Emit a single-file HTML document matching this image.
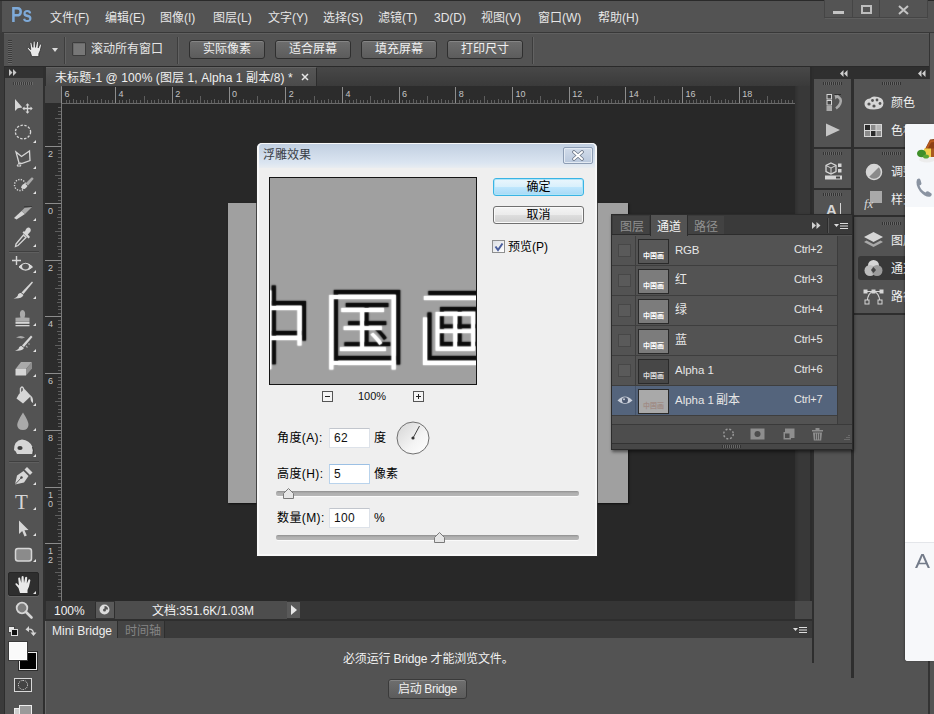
<!DOCTYPE html><html lang="zh"><head><meta charset="utf-8"><title>Photoshop</title><style>
*{box-sizing:border-box;margin:0;padding:0}
html,body{width:934px;height:714px;overflow:hidden;background:#535353}
body{position:relative;font-family:"Liberation Sans","Noto Sans CJK SC",sans-serif;font-size:12px;color:#e6e6e6;line-height:1}
.a{position:absolute}
.t{position:absolute;white-space:nowrap;line-height:14px;height:14px}
.btn{position:absolute;height:19px;border:1px solid #2f2f2f;border-radius:3px;background:linear-gradient(#6e6e6e,#5c5c5c);color:#f0f0f0;text-align:center;line-height:17px;font-size:12px;box-shadow:inset 0 1px 0 #858585}
.sep{position:absolute;width:1px;background:#3d3d3d;box-shadow:1px 0 0 #626262}
.dk{color:#222}
.row{position:absolute;left:612px;width:225px;height:30px;border-bottom:1px solid #3e3e3e;background:#535353}
.row .eye{position:absolute;left:0;top:0;width:24px;height:29px;border-right:1px solid #3e3e3e}
.row .cb{position:absolute;left:6px;top:8px;width:13px;height:13px;border:1px solid #474747;background:#5a5a5a}
.row .th{position:absolute;left:26px;top:3px;width:31px;height:25px;border:1px solid #2a2a2a;background:#3c3c3c;font-size:7px;line-height:23px;text-align:center;color:#eee;padding-top:4px;font-weight:bold}
.row .nm{position:absolute;left:63px;top:7px;line-height:14px;white-space:nowrap}
.row .sc{position:absolute;left:182px;top:6px;line-height:14px;font-size:11px;white-space:nowrap;letter-spacing:-0.2px}
.inp{position:absolute;width:41px;height:20px;border:1px solid #dde2e9;border-top-color:#c2c6cd;background:#fff;color:#111;line-height:18px;padding-left:4px;font-size:12px;letter-spacing:0.3px}
</style></head><body>
<div class="a" style="left:0;top:0;width:934px;height:1px;background:#2a2a2a"></div>
<div class="a" style="left:0;top:1px;width:934px;height:31px;background:#535353"></div>
<div class="a" style="left:0;top:32px;width:934px;height:1px;background:#383838"></div>
<div class="t" style="left:11px;top:3px;font-size:22.5px;font-weight:bold;color:#7eaad9;line-height:24px;height:24px;transform-origin:0 0;transform:scaleX(0.77)">Ps</div>
<div class="t" style="left:50px;top:11px">文件(F)</div>
<div class="t" style="left:105px;top:11px">编辑(E)</div>
<div class="t" style="left:160px;top:11px">图像(I)</div>
<div class="t" style="left:213px;top:11px">图层(L)</div>
<div class="t" style="left:268px;top:11px">文字(Y)</div>
<div class="t" style="left:323px;top:11px">选择(S)</div>
<div class="t" style="left:378px;top:11px">滤镜(T)</div>
<div class="t" style="left:434px;top:11px">3D(D)</div>
<div class="t" style="left:481px;top:11px">视图(V)</div>
<div class="t" style="left:538px;top:11px">窗口(W)</div>
<div class="t" style="left:598px;top:11px">帮助(H)</div>
<div class="a" style="left:824px;top:0;width:104px;height:18px;border:1px solid #454545;border-top:none;background:#545454;box-shadow:0 2px 0 -1px #5e5e5e"></div>
<div class="a" style="left:852px;top:0;width:1px;height:17px;background:#454545"></div>
<div class="a" style="left:879px;top:0;width:1px;height:17px;background:#454545"></div>
<div class="a" style="left:833px;top:11px;width:11px;height:3px;background:#c4c4c4"></div>
<div class="a" style="left:861px;top:5px;width:11px;height:9px;border:2px solid #bdbdbd;border-top-width:2px"></div>
<svg class="a" style="left:898px;top:5px" width="11" height="10"><path d="M1 1 L10 9 M10 1 L1 9" stroke="#c4c4c4" stroke-width="2"/></svg>
<div class="a" style="left:0;top:1px;width:2px;height:32px;background:#3d3d3d"></div>
<div class="a" style="left:0;top:33px;width:934px;height:33px;background:#535353;border-top:1px solid #5f5f5f"></div>
<div class="a" style="left:0;top:66px;width:934px;height:1px;background:#2a2a2a"></div>
<div class="a" style="left:8px;top:40px;width:4px;height:24px;background:repeating-linear-gradient(#3a3a3a 0 1px,#666 1px 2px)"></div>
<svg class="a" style="left:26px;top:40px" width="19" height="17.5" viewBox="0 0 20 19" preserveAspectRatio="none"><path d="M6 18 L4.5 13 L1.5 9.5 Q1 8 2.6 8.2 L5 10.5 L4.2 3.5 Q4.5 2 6 2.8 L7.3 8 L7.6 1.8 Q8.4 0.4 9.6 1.6 L10 8 L11.2 2.2 Q12.2 1 13.2 2.4 L12.8 8.6 L14.6 4.6 Q15.8 3.8 16.4 5.2 L15 11.5 L13.5 15 L13.5 18 Z" fill="#e9e9e9" stroke="#2b2b2b" stroke-width="0.8"/></svg>
<div class="a" style="left:52px;top:48px;width:0;height:0;border:3.5px solid transparent;border-top:4px solid #dcdcdc"></div>
<div class="sep" style="left:64px;top:37px;height:27px"></div>
<div class="a" style="left:72px;top:42px;width:14px;height:14px;border:1px solid #3c3c3c;background:#777;border-radius:1px;box-shadow:inset 1px 1px 0 #686868"></div>
<div class="t" style="left:91px;top:42px">滚动所有窗口</div>
<div class="sep" style="left:177px;top:37px;height:27px"></div>
<div class="btn" style="left:189px;top:40px;width:76px">实际像素</div>
<div class="btn" style="left:275px;top:40px;width:76px">适合屏幕</div>
<div class="btn" style="left:361px;top:40px;width:76px">填充屏幕</div>
<div class="btn" style="left:447px;top:40px;width:76px">打印尺寸</div>
<div class="sep" style="left:532px;top:37px;height:27px"></div>
<div class="a" style="left:0;top:33px;width:4px;height:681px;background:#3b3b3b"></div><div class="a" style="left:4px;top:67px;width:1px;height:647px;background:#2e2e2e"></div>
<div class="a" style="left:5px;top:67px;width:38px;height:647px;background:#535353"></div>
<div class="a" style="left:5px;top:67px;width:38px;height:11px;background:#323232"></div>
<svg class="a" style="left:9px;top:69px" width="8" height="7"><path d="M0 0 L3.5 3.5 L0 7Z M4 0 L7.5 3.5 L4 7Z" fill="#c8c8c8"/></svg>
<div class="a" style="left:13px;top:82px;width:20px;height:3px;background:repeating-linear-gradient(90deg,#3a3a3a 0 1px,#6a6a6a 1px 2px)"></div>
<div class="a" style="left:43px;top:67px;width:3px;height:647px;background:#2f2f2f"></div>
<svg class="a" style="left:13px;top:98px" width="21" height="17" viewBox="0 0 21 17" ><path d="M2 1 L2 13 L4.8 10.3 L9.4 9.6 Z" fill="#d6d6d6"/><path d="M14.5 6.5 V14.5 M10.5 10.5 H18.5" stroke="#d6d6d6" stroke-width="1.3"/><path d="M14.5 5.3 l-2 2.2 h4z M14.5 15.7 l-2 -2.2 h4z M9.3 10.5 l2.2 -2 v4z M19.7 10.5 l-2.2 -2 v4z" fill="#d6d6d6"/></svg>
<svg class="a" style="left:13px;top:123px" width="21" height="18" viewBox="0 0 21 18" ><ellipse cx="10" cy="9" rx="7.6" ry="6.8" fill="none" stroke="#d6d6d6" stroke-width="1.3" stroke-dasharray="2.4 1.5"/></svg>
<div class="a" style="left:33px;top:140px;width:0;height:0;border-left:3px solid transparent;border-bottom:3px solid #e4e4e4"></div>
<svg class="a" style="left:13px;top:148px" width="21" height="20" viewBox="0 0 21 20" ><path d="M3 4 L8.5 8.5 L16.5 3 L17 12.5 L8.5 15.5 L6 15 Z" fill="none" stroke="#d6d6d6" stroke-width="1.3"/><path d="M6 15 L4 18 L8 18 Z" fill="none" stroke="#d6d6d6" stroke-width="1"/></svg>
<div class="a" style="left:33px;top:166px;width:0;height:0;border-left:3px solid transparent;border-bottom:3px solid #e4e4e4"></div>
<svg class="a" style="left:12px;top:175px" width="23" height="19" viewBox="0 0 23 19" ><circle cx="8" cy="10" r="5.5" fill="none" stroke="#d6d6d6" stroke-width="1.4" stroke-dasharray="1.3 1.3"/><path d="M9 12.5 Q10 9 13 8.5 L15.5 11 Q14 14 10.5 14 Z" fill="#d6d6d6"/><path d="M13.5 8.5 L19.5 2.5 Q21.5 2 21.5 4 L16 10.5 Z" fill="#a9a9a9"/></svg>
<div class="a" style="left:33px;top:191px;width:0;height:0;border-left:3px solid transparent;border-bottom:3px solid #e4e4e4"></div>
<svg class="a" style="left:12px;top:203px" width="22" height="18" viewBox="0 0 22 18" ><path d="M2 15 L9.5 8 L13 11 L4.5 16.5 Z" fill="#d6d6d6"/><path d="M9.5 8 L13 4.5 L20 4 L13 11 Z" fill="#a9a9a9"/><path d="M12 3 L20 3 L20 4 L12.5 4.5Z" fill="#3a3a3a"/></svg>
<div class="a" style="left:33px;top:218px;width:0;height:0;border-left:3px solid transparent;border-bottom:3px solid #e4e4e4"></div>
<svg class="a" style="left:13px;top:225px" width="20" height="24" viewBox="0 0 20 24" ><path d="M3 19 L10.5 10 L13 12.5 L5 20.5 L2.5 21.5 Z" fill="none" stroke="#d6d6d6" stroke-width="1.3"/><path d="M9.5 7.5 L15.5 13.5 L17 12 L14.8 9.6 L17.5 6.5 Q18.5 3.5 16 2.5 Q14 2 12.8 4.5 L11.8 6.8 L11 6 Z" fill="#d6d6d6"/></svg>
<div class="a" style="left:33px;top:244px;width:0;height:0;border-left:3px solid transparent;border-bottom:3px solid #e4e4e4"></div>
<div class="a" style="left:9px;top:251px;width:30px;height:1px;background:#3f3f3f;box-shadow:0 1px 0 #5f5f5f"></div>
<svg class="a" style="left:11px;top:255px" width="23" height="19" viewBox="0 0 23 19" ><path d="M5.5 1 V10 M1 5.5 H10" stroke="#d6d6d6" stroke-width="1.4"/><path d="M8 12 Q14.5 4.5 21.5 12 Q14.5 18.5 8 12 Z" fill="#d6d6d6" stroke="#efefef" stroke-width="0.8"/><ellipse cx="14.5" cy="11.6" rx="3.4" ry="2.8" fill="#555"/></svg>
<div class="a" style="left:33px;top:270px;width:0;height:0;border-left:3px solid transparent;border-bottom:3px solid #e4e4e4"></div>
<svg class="a" style="left:12px;top:280px" width="22" height="21" viewBox="0 0 22 21" ><path d="M20 1.5 L21 2.5 L11.5 14 L9.5 12.5 Z" fill="#d6d6d6"/><path d="M9 13 L11.5 15 Q10 19 1.5 18.5 Q6 17 6 14.5 Q7 12.5 9 13Z" fill="#d6d6d6"/></svg>
<div class="a" style="left:33px;top:296px;width:0;height:0;border-left:3px solid transparent;border-bottom:3px solid #e4e4e4"></div>
<svg class="a" style="left:14px;top:308px" width="18" height="20" viewBox="0 0 18 20" ><path d="M6.5 9.5 Q4.5 3 8.5 2 Q12.5 3 10.5 9.5 L15.5 9.8 V13 H1.5 V9.8 Z" fill="#a9a9a9"/><rect x="1.5" y="13.5" width="14" height="2.3" fill="#d6d6d6"/><rect x="1.5" y="17" width="14" height="1.3" fill="#d6d6d6"/></svg>
<div class="a" style="left:33px;top:323px;width:0;height:0;border-left:3px solid transparent;border-bottom:3px solid #e4e4e4"></div>
<svg class="a" style="left:13px;top:334px" width="21" height="19" viewBox="0 0 21 19" ><path d="M18 1.5 L19.5 3 L11 13 L9 11.5 Z" fill="#d6d6d6"/><path d="M8.5 12 L11 14 Q9 17.5 2 16.5 Q6 15.5 6 13.5 Q7 11.5 8.5 12Z" fill="#d6d6d6"/><path d="M3 3.5 Q8 0.5 12 3.5 L9 4.5 Z" fill="#a9a9a9"/><path d="M13 12 l1.5 1.5 M15.5 9.5 l1 1" stroke="#a9a9a9" stroke-width="1.2"/></svg>
<div class="a" style="left:33px;top:349px;width:0;height:0;border-left:3px solid transparent;border-bottom:3px solid #e4e4e4"></div>
<svg class="a" style="left:13px;top:360px" width="21" height="18" viewBox="0 0 21 18" ><path d="M8 2 H19 L13 9 H2.5 Z" fill="#a9a9a9"/><path d="M2.5 9 H13 V15.5 H2.5 Z" fill="#d6d6d6"/><path d="M13 9 L19 2 V8.5 L13 15.5 Z" fill="#8e8e8e"/></svg>
<div class="a" style="left:33px;top:374px;width:0;height:0;border-left:3px solid transparent;border-bottom:3px solid #e4e4e4"></div>
<svg class="a" style="left:13px;top:385px" width="22" height="22" viewBox="0 0 22 22" ><path d="M6 9 L11.5 4 L18 11 L10 18.5 L3.5 13.5 Z" fill="#d6d6d6"/><path d="M7.5 8 V3.5 Q9 0.5 10.5 3.5 V8" fill="none" stroke="#d6d6d6" stroke-width="1.4"/><path d="M17 10.5 Q20.5 11 20 18 Q17.5 17 17.5 13 Z" fill="#d6d6d6"/></svg>
<div class="a" style="left:33px;top:403px;width:0;height:0;border-left:3px solid transparent;border-bottom:3px solid #e4e4e4"></div>
<svg class="a" style="left:15px;top:411px" width="16" height="21" viewBox="0 0 16 21" ><path d="M8 1.5 Q14 11 13.5 14 Q13 19 8 19 Q2.5 19 2.2 14 Q2 11 8 1.5 Z" fill="#a9a9a9"/></svg>
<div class="a" style="left:33px;top:428px;width:0;height:0;border-left:3px solid transparent;border-bottom:3px solid #e4e4e4"></div>
<svg class="a" style="left:11px;top:437px" width="25" height="20" viewBox="0 0 25 20" ><path d="M3 13 Q3 3.5 11 2.5 Q18.5 3 21.5 10 Q22.5 13 21.5 17 L6 17 Q5 14 3 13 Z" fill="#d6d6d6"/><ellipse cx="9" cy="11" rx="2.6" ry="2" fill="#3d3d3d"/><path d="M21.5 10 Q23 13 22 17" stroke="#3a3a3a" stroke-width="1" fill="none"/></svg>
<div class="a" style="left:33px;top:454px;width:0;height:0;border-left:3px solid transparent;border-bottom:3px solid #e4e4e4"></div>
<div class="a" style="left:9px;top:461px;width:30px;height:1px;background:#3f3f3f;box-shadow:0 1px 0 #5f5f5f"></div>
<svg class="a" style="left:12px;top:465px" width="22" height="22" viewBox="0 0 22 22" ><path d="M3 19.5 L5 10.5 L11.5 6 L16.5 11 L12 17.5 Z" fill="#d6d6d6"/><path d="M12.5 4.5 L15 2 L20.5 7.5 L18 10 Z" fill="#d6d6d6"/><circle cx="9.5" cy="12.5" r="1.2" fill="#444"/><path d="M3 19.5 L9 13" stroke="#444" stroke-width="0.8"/></svg>
<div class="a" style="left:33px;top:482px;width:0;height:0;border-left:3px solid transparent;border-bottom:3px solid #e4e4e4"></div>
<div class="t" style="left:15px;top:491px;font-family:'Liberation Serif',serif;font-size:21px;line-height:22px;height:22px;color:#d6d6d6">T</div>
<div class="a" style="left:33px;top:507px;width:0;height:0;border-left:3px solid transparent;border-bottom:3px solid #e4e4e4"></div>
<svg class="a" style="left:16px;top:519px" width="14" height="19" viewBox="0 0 14 19" ><path d="M3 1.5 L3 15 L6.2 12 L8.5 17.5 L10.8 16.5 L8.5 11.2 L12.5 11 Z" fill="#d6d6d6"/></svg>
<div class="a" style="left:33px;top:533px;width:0;height:0;border-left:3px solid transparent;border-bottom:3px solid #e4e4e4"></div>
<svg class="a" style="left:14px;top:547px" width="19" height="16" viewBox="0 0 19 16" ><rect x="1.5" y="1.5" width="16" height="12.5" rx="2.5" fill="#8b8b8b" stroke="#d6d6d6" stroke-width="1.5"/></svg>
<div class="a" style="left:33px;top:559px;width:0;height:0;border-left:3px solid transparent;border-bottom:3px solid #e4e4e4"></div>
<div class="a" style="left:8px;top:572px;width:31px;height:24px;background:#2e2e2e;border:1px solid #262626;border-radius:2px;box-shadow:0 1px 0 #646464"></div>
<svg class="a" style="left:14px;top:575px" width="20" height="19" viewBox="0 0 20 19" ><path d="M6 18 L4.5 13 L1.5 9.5 Q1 8 2.6 8.2 L5 10.5 L4.2 3.5 Q4.5 2 6 2.8 L7.3 8 L7.6 1.8 Q8.4 0.4 9.6 1.6 L10 8 L11.2 2.2 Q12.2 1 13.2 2.4 L12.8 8.6 L14.6 4.6 Q15.8 3.8 16.4 5.2 L15 11.5 L13.5 15 L13.5 18 Z" fill="#e9e9e9"/></svg>
<div class="a" style="left:33px;top:591px;width:0;height:0;border-left:3px solid transparent;border-bottom:3px solid #e4e4e4"></div>
<svg class="a" style="left:14px;top:600px" width="20" height="20" viewBox="0 0 20 20" ><circle cx="8" cy="8" r="5.3" fill="#7d7d7d" stroke="#d6d6d6" stroke-width="1.8"/><path d="M12 12 L17.5 17.5" stroke="#d6d6d6" stroke-width="2.6" stroke-linecap="round"/></svg>
<div class="a" style="left:8px;top:626px;width:7px;height:7px;background:#e8e8e8;border:1px solid #444"></div>
<div class="a" style="left:11px;top:629px;width:7px;height:7px;background:#111;border:1px solid #ddd"></div>
<svg class="a" style="left:25px;top:624px" width="12" height="13" viewBox="0 0 12 13" ><path d="M3 5.5 Q7.5 4 8.5 9" fill="none" stroke="#d6d6d6" stroke-width="1.3"/><path d="M0.5 5.5 L4 2 V8Z M8.5 12 L5.5 8.5 H11.5Z" fill="#d6d6d6"/></svg>
<div class="a" style="left:19px;top:652px;width:18px;height:18px;background:#000;border:1px solid #e8e8e8;box-shadow:0 0 0 1px #2c2c2c"></div>
<div class="a" style="left:9px;top:642px;width:18px;height:18px;background:#fafafa;border:1px solid #fff;box-shadow:0 0 0 1px #3a3a3a"></div>
<div class="a" style="left:14px;top:678px;width:18px;height:14px;border:1px solid #d8d8d8;background:#444"></div>
<div class="a" style="left:18px;top:680px;width:10px;height:10px;border:1px dotted #e0e0e0;border-radius:50%"></div>
<div class="a" style="left:14px;top:708px;width:12px;height:8px;background:#cfcfcf;border:1px solid #eee"></div>
<div class="a" style="left:19px;top:705px;width:13px;height:10px;background:#9a9a9a;border:1px solid #eee"></div>
<div class="a" style="left:46px;top:67px;width:766px;height:19px;background:linear-gradient(#484848,#3a3a3a)"></div>
<div class="a" style="left:46px;top:67px;width:271px;height:19px;background:linear-gradient(#565656,#4b4b4b);border-right:1px solid #2c2c2c;border-top:1px solid #626262"></div>
<div class="t" style="left:55px;top:71px;color:#f0f0f0;letter-spacing:0.1px">未标题-1 @ 100% (图层 1, Alpha 1 副本/8) *</div>
<svg class="a" style="left:301px;top:73px" width="8" height="8" viewBox="0 0 8 8" ><path d="M1 1 L7 7 M7 1 L1 7" stroke="#e6e6e6" stroke-width="1.5"/></svg>
<div class="a" style="left:46px;top:86px;width:766px;height:533px;background:#282828"></div>
<div class="a" style="left:45px;top:86px;width:750px;height:18px;background:#2c2c2c;border-bottom:1px solid #6a6a6a"></div>
<div class="a" style="left:45px;top:86px;width:17px;height:515px;background:#2c2c2c;border-right:1px solid #7a7a7a"></div>
<div class="a" style="left:45px;top:86px;width:16px;height:17px;background:#4a4a4a"></div>
<svg class="a" style="left:46px;top:86px" width="749" height="18" viewBox="0 0 749 18" ><path d="M20 17V14 M23.6 17V14 M27.1 17V13 M30.6 17V14 M34.2 17V14 M37.7 17V14 M41.3 17V10 M44.8 17V14 M48.4 17V14 M51.9 17V14 M55.4 17V13 M59 17V14 M62.5 17V14 M66.1 17V14 M73.2 17V14 M76.7 17V14 M80.2 17V14 M83.8 17V13 M87.3 17V14 M90.9 17V14 M94.4 17V14 M98 17V10 M101.5 17V14 M105 17V14 M108.6 17V14 M112.1 17V13 M115.7 17V14 M119.2 17V14 M122.8 17V14 M129.9 17V14 M133.4 17V14 M136.9 17V14 M140.5 17V13 M144 17V14 M147.6 17V14 M151.1 17V14 M154.7 17V10 M158.2 17V14 M161.7 17V14 M165.3 17V14 M168.8 17V13 M172.4 17V14 M175.9 17V14 M179.5 17V14 M186.5 17V14 M190.1 17V14 M193.6 17V14 M197.2 17V13 M200.7 17V14 M204.3 17V14 M207.8 17V14 M211.3 17V10 M214.9 17V14 M218.4 17V14 M222 17V14 M225.5 17V13 M229.1 17V14 M232.6 17V14 M236.1 17V14 M243.2 17V14 M246.8 17V14 M250.3 17V14 M253.9 17V13 M257.4 17V14 M261 17V14 M264.5 17V14 M268 17V10 M271.6 17V14 M275.1 17V14 M278.7 17V14 M282.2 17V13 M285.8 17V14 M289.3 17V14 M292.8 17V14 M299.9 17V14 M303.5 17V14 M307 17V14 M310.6 17V13 M314.1 17V14 M317.6 17V14 M321.2 17V14 M324.7 17V10 M328.3 17V14 M331.8 17V14 M335.4 17V14 M338.9 17V13 M342.4 17V14 M346 17V14 M349.5 17V14 M356.6 17V14 M360.2 17V14 M363.7 17V14 M367.2 17V13 M370.8 17V14 M374.3 17V14 M377.9 17V14 M381.4 17V10 M385 17V14 M388.5 17V14 M392.1 17V14 M395.6 17V13 M399.1 17V14 M402.7 17V14 M406.2 17V14 M413.3 17V14 M416.9 17V14 M420.4 17V14 M423.9 17V13 M427.5 17V14 M431 17V14 M434.6 17V14 M438.1 17V10 M441.7 17V14 M445.2 17V14 M448.7 17V14 M452.3 17V13 M455.8 17V14 M459.4 17V14 M462.9 17V14 M470 17V14 M473.5 17V14 M477.1 17V14 M480.6 17V13 M484.2 17V14 M487.7 17V14 M491.3 17V14 M494.8 17V10 M498.3 17V14 M501.9 17V14 M505.4 17V14 M509 17V13 M512.5 17V14 M516.1 17V14 M519.6 17V14 M526.7 17V14 M530.2 17V14 M533.8 17V14 M537.3 17V13 M540.9 17V14 M544.4 17V14 M548 17V14 M551.5 17V10 M555 17V14 M558.6 17V14 M562.1 17V14 M565.7 17V13 M569.2 17V14 M572.8 17V14 M576.3 17V14 M583.4 17V14 M586.9 17V14 M590.5 17V14 M594 17V13 M597.6 17V14 M601.1 17V14 M604.6 17V14 M608.2 17V10 M611.7 17V14 M615.3 17V14 M618.8 17V14 M622.4 17V13 M625.9 17V14 M629.4 17V14 M633 17V14 M640.1 17V14 M643.6 17V14 M647.2 17V14 M650.7 17V13 M654.3 17V14 M657.8 17V14 M661.3 17V14 M664.9 17V10 M668.4 17V14 M672 17V14 M675.5 17V14 M679.1 17V13 M682.6 17V14 M686.1 17V14 M689.7 17V14 M696.8 17V14 M700.3 17V14 M703.9 17V14 M707.4 17V13 M710.9 17V14 M714.5 17V14 M718 17V14 M721.6 17V10 M725.1 17V14 M728.7 17V14 M732.2 17V14 M735.7 17V13 M739.3 17V14 M742.8 17V14 M746.4 17V14" stroke="#5e5e5e" stroke-width="1" shape-rendering="crispEdges"/><path d="M15.5 1V17 M69.6 1V17 M126.3 1V17 M183 1V17 M239.7 1V17 M296.4 1V17 M353.1 1V17 M409.8 1V17 M466.5 1V17 M523.2 1V17 M579.8 1V17 M636.5 1V17 M693.2 1V17" stroke="#8c8c8c" stroke-width="1" shape-rendering="crispEdges"/><g fill="#c4c4c4" font-size="9" font-family="Liberation Sans, sans-serif"><text x="18.5" y="10.5">6</text><text x="72.6" y="10.5">4</text><text x="129.3" y="10.5">2</text><text x="186" y="10.5">0</text><text x="242.7" y="10.5">2</text><text x="299.4" y="10.5">4</text><text x="356.1" y="10.5">6</text><text x="412.8" y="10.5">8</text><text x="469.5" y="10.5">10</text><text x="526.2" y="10.5">12</text><text x="582.8" y="10.5">14</text><text x="639.5" y="10.5">16</text><text x="696.2" y="10.5">18</text></g></svg>
<svg class="a" style="left:45px;top:86px" width="17" height="515" viewBox="0 0 17 515" ><path d="M16 21.8H13 M16 25.4H13 M16 28.9H13 M16 32.5H10 M16 36H13 M16 39.5H13 M16 43.1H13 M16 46.6H12 M16 50.2H13 M16 53.7H13 M16 57.3H13 M16 64.4H13 M16 67.9H13 M16 71.4H13 M16 75H12 M16 78.5H13 M16 82.1H13 M16 85.6H13 M16 89.2H10 M16 92.7H13 M16 96.2H13 M16 99.8H13 M16 103.3H12 M16 106.9H13 M16 110.4H13 M16 114H13 M16 121H13 M16 124.6H13 M16 128.1H13 M16 131.7H12 M16 135.2H13 M16 138.8H13 M16 142.3H13 M16 145.8H10 M16 149.4H13 M16 152.9H13 M16 156.5H13 M16 160H12 M16 163.6H13 M16 167.1H13 M16 170.6H13 M16 177.7H13 M16 181.3H13 M16 184.8H13 M16 188.4H12 M16 191.9H13 M16 195.5H13 M16 199H13 M16 202.5H10 M16 206.1H13 M16 209.6H13 M16 213.2H13 M16 216.7H12 M16 220.3H13 M16 223.8H13 M16 227.3H13 M16 234.4H13 M16 238H13 M16 241.5H13 M16 245.1H12 M16 248.6H13 M16 252.1H13 M16 255.7H13 M16 259.2H10 M16 262.8H13 M16 266.3H13 M16 269.9H13 M16 273.4H12 M16 276.9H13 M16 280.5H13 M16 284H13 M16 291.1H13 M16 294.7H13 M16 298.2H13 M16 301.7H12 M16 305.3H13 M16 308.8H13 M16 312.4H13 M16 315.9H10 M16 319.5H13 M16 323H13 M16 326.6H13 M16 330.1H12 M16 333.6H13 M16 337.2H13 M16 340.7H13 M16 347.8H13 M16 351.4H13 M16 354.9H13 M16 358.4H12 M16 362H13 M16 365.5H13 M16 369.1H13 M16 372.6H10 M16 376.2H13 M16 379.7H13 M16 383.2H13 M16 386.8H12 M16 390.3H13 M16 393.9H13 M16 397.4H13 M16 404.5H13 M16 408H13 M16 411.6H13 M16 415.1H12 M16 418.7H13 M16 422.2H13 M16 425.8H13 M16 429.3H10 M16 432.8H13 M16 436.4H13 M16 439.9H13 M16 443.5H12 M16 447H13 M16 450.6H13 M16 454.1H13 M16 461.2H13 M16 464.7H13 M16 468.3H13 M16 471.8H12 M16 475.4H13 M16 478.9H13 M16 482.5H13 M16 486H10 M16 489.5H13 M16 493.1H13 M16 496.6H13 M16 500.2H12 M16 503.7H13 M16 507.3H13 M16 510.8H13" stroke="#5e5e5e" stroke-width="1" shape-rendering="crispEdges"/><path d="M0 60.8H16 M0 117.5H16 M0 174.2H16 M0 230.9H16 M0 287.6H16 M0 344.3H16 M0 401H16 M0 457.7H16" stroke="#8c8c8c" stroke-width="1" shape-rendering="crispEdges"/><g fill="#c4c4c4" font-size="9" font-family="Liberation Sans, sans-serif"><text x="3" y="71.3">2</text><text x="3" y="128">0</text><text x="3" y="184.7">2</text><text x="3" y="241.4">4</text><text x="3" y="298.1">6</text><text x="3" y="354.8">8</text><text x="3" y="411.5">1</text><text x="3" y="420.5">0</text><text x="3" y="468.2">1</text><text x="3" y="477.2">2</text></g></svg>
<div class="a" style="left:795px;top:86px;width:15px;height:515px;background:linear-gradient(90deg,#303030,#383838 4px,#383838)"></div><div class="a" style="left:810px;top:67px;width:2px;height:552px;background:#2b2b2b"></div>
<div class="a" style="left:46px;top:601px;width:766px;height:18px;background:#353535"></div>
<div class="a" style="left:795px;top:601px;width:17px;height:18px;background:#4a4a4a"></div>
<div class="a" style="left:46px;top:601px;width:49px;height:18px;background:#3c3c3c"></div><div class="a" style="left:115px;top:601px;width:172px;height:18px;background:#4d4d4d"></div>
<div class="t" style="left:54px;top:604px;color:#f2f2f2">100%</div>
<div class="a" style="left:95px;top:602px;width:1px;height:16px;background:#2e2e2e"></div>
<div class="a" style="left:96px;top:602px;width:18px;height:16px;background:#5a5a5a"></div>
<svg class="a" style="left:98px;top:603px" width="13" height="13" viewBox="0 0 13 13" ><circle cx="6.5" cy="6.5" r="5" fill="#dcdcdc"/><path d="M6.5 6.5 V3 A3.5 3.5 0 0 1 10 6.5Z" fill="#555"/><circle cx="6.5" cy="7" r="1.5" fill="#555"/></svg>
<div class="a" style="left:114px;top:602px;width:1px;height:16px;background:#2e2e2e"></div>
<div class="t" style="left:152px;top:604px;color:#f2f2f2">文档:351.6K/1.03M</div>
<div class="a" style="left:287px;top:602px;width:13px;height:16px;background:#595959"></div>
<div class="a" style="left:291px;top:605px;width:0;height:0;border:5px solid transparent;border-left:6px solid #e8e8e8;border-right:0"></div>
<div class="a" style="left:228px;top:203px;width:400px;height:300px;background:#a0a0a0;box-shadow:1px 1px 2px #111"></div>
<div class="a" style="left:46px;top:619px;width:766px;height:2px;background:#2e2e2e"></div>
<div class="a" style="left:46px;top:621px;width:766px;height:17px;background:#3a3a3a"></div>
<div class="a" style="left:46px;top:638px;width:766px;height:76px;background:#535353"></div>
<div class="a" style="left:45px;top:621px;width:1px;height:93px;background:#6a6a6a"></div>
<div class="a" style="left:46px;top:621px;width:72px;height:17px;background:#535353;border-right:1px solid #2e2e2e"></div>
<div class="t" style="left:52px;top:624px;color:#eee">Mini Bridge</div>
<div class="a" style="left:118px;top:621px;width:47px;height:17px;background:#444;border-right:1px solid #2e2e2e"></div>
<div class="t" style="left:125px;top:624px;color:#858585">时间轴</div>
<svg class="a" style="left:793px;top:626px" width="15" height="8" viewBox="0 0 15 8" ><path d="M0 2 H5 L2.5 5Z" fill="#ddd"/><path d="M6 1.5H14M6 4H14M6 6.5H14" stroke="#ddd" stroke-width="1"/></svg>
<div class="t" style="left:343px;top:652px;color:#f2f2f2;letter-spacing:-0.15px">必须运行 Bridge 才能浏览文件。</div>
<div class="btn" style="left:388px;top:679px;width:79px;height:20px;line-height:18px;letter-spacing:-0.35px;border-color:#3a3a3a">启动 Bridge</div>
<div class="a" style="left:812px;top:67px;width:122px;height:647px;background:#535353"></div>
<div class="a" style="left:812px;top:67px;width:2px;height:596px;background:#2e2e2e"></div>
<div class="a" style="left:851px;top:67px;width:3px;height:611px;background:#2e2e2e"></div>
<div class="a" style="left:814px;top:67px;width:116px;height:12px;background:#2f2f2f"></div>
<div class="a" style="left:929px;top:33px;width:1px;height:46px;background:#333"></div>
<div class="a" style="left:930px;top:33px;width:4px;height:92px;background:#585858"></div>
<div class="a" style="left:928px;top:660px;width:2px;height:54px;background:#333"></div>
<svg class="a" style="left:840px;top:70px" width="8" height="7" viewBox="0 0 8 7" ><path d="M3.5 0 L0 3.5 L3.5 7Z M7.5 0 L4 3.5 L7.5 7Z" fill="#d0d0d0"/></svg>
<svg class="a" style="left:918px;top:70px" width="8" height="7" viewBox="0 0 8 7" ><path d="M3.5 0 L0 3.5 L3.5 7Z M7.5 0 L4 3.5 L7.5 7Z" fill="#d0d0d0"/></svg>
<div class="a" style="left:814px;top:147px;width:37px;height:2px;background:#2e2e2e"></div>
<div class="a" style="left:814px;top:188px;width:37px;height:2px;background:#2e2e2e"></div>
<div class="a" style="left:854px;top:147px;width:76px;height:2px;background:#2e2e2e"></div>
<div class="a" style="left:854px;top:215px;width:76px;height:2px;background:#2e2e2e"></div>
<div class="a" style="left:854px;top:313px;width:76px;height:2px;background:#2e2e2e"></div>
<div class="a" style="left:823px;top:82px;width:19px;height:3px;background:repeating-linear-gradient(90deg,#333 0 1px,#666 1px 2px)"></div>
<div class="a" style="left:823px;top:152px;width:19px;height:3px;background:repeating-linear-gradient(90deg,#333 0 1px,#666 1px 2px)"></div>
<div class="a" style="left:823px;top:193px;width:19px;height:3px;background:repeating-linear-gradient(90deg,#333 0 1px,#666 1px 2px)"></div>
<div class="a" style="left:882px;top:82px;width:19px;height:3px;background:repeating-linear-gradient(90deg,#333 0 1px,#666 1px 2px)"></div>
<div class="a" style="left:882px;top:152px;width:19px;height:3px;background:repeating-linear-gradient(90deg,#333 0 1px,#666 1px 2px)"></div>
<div class="a" style="left:882px;top:222px;width:19px;height:3px;background:repeating-linear-gradient(90deg,#333 0 1px,#666 1px 2px)"></div>
<svg class="a" style="left:825px;top:93px" width="19" height="19" viewBox="0 0 19 19" ><rect x="2" y="1.5" width="4.5" height="4.5" fill="#444" stroke="#d6d6d6"/><rect x="2" y="7.5" width="4.5" height="4.5" fill="#444" stroke="#d6d6d6"/><rect x="1.5" y="13" width="5.5" height="5" fill="#a9a9a9"/><path d="M9.5 1.5H16" stroke="#2e2e2e" stroke-width="1"/><path d="M11.5 3 Q17.5 5.5 15.2 10.5 Q14 13.5 11 15.5" fill="none" stroke="#a9a9a9" stroke-width="2.6"/><path d="M9.5 2 L14 2.5 L10.5 6.5Z" fill="#a9a9a9"/></svg>
<svg class="a" style="left:825px;top:122px" width="16" height="16" viewBox="0 0 16 16" ><path d="M1 1.5 L15 8 L1 14.5Z" fill="#c4c4c4"/></svg>
<svg class="a" style="left:824px;top:162px" width="19" height="18" viewBox="0 0 19 18" ><path d="M7 1 L12 3.5 V9.5 L7 12 L2 9.5 V3.5Z" fill="none" stroke="#d6d6d6" stroke-width="1.3"/><path d="M2 3.5 L7 6 L12 3.5 M7 6 V12" stroke="#d6d6d6" stroke-width="1" fill="none"/><rect x="14" y="1.5" width="3.5" height="3.5" fill="#d6d6d6"/><rect x="14" y="7" width="3.5" height="3.5" fill="#d6d6d6"/><rect x="1" y="13.5" width="17" height="4" fill="#d6d6d6"/><rect x="12" y="14.5" width="4" height="2" fill="#444"/></svg>
<div class="t" style="left:826px;top:202px;font-size:15px;font-weight:bold;color:#d6d6d6;height:13px;line-height:16px;overflow:hidden">A</div>
<div class="a" style="left:840px;top:203px;width:1px;height:12px;background:#d6d6d6"></div>
<svg class="a" style="left:863px;top:95px" width="22" height="16" viewBox="0 0 22 16" ><path d="M11 1.5 Q20.5 1.5 20.5 8 Q20.5 14.5 11 14.5 Q1.5 14.5 1.5 9 Q1.5 4 7 3.5 Q9 1.5 11 1.5Z" fill="#d6d6d6"/><circle cx="6" cy="9" r="1.6" fill="#555"/><circle cx="9.5" cy="5.5" r="1.4" fill="#555"/><circle cx="14" cy="5" r="1.4" fill="#555"/><circle cx="17" cy="8.5" r="1.4" fill="#555"/><circle cx="11" cy="11" r="1.6" fill="#555"/></svg>
<div class="t" style="left:891px;top:96px;color:#f0f0f0">颜色</div>
<svg class="a" style="left:864px;top:124px" width="18" height="13" viewBox="0 0 18 13" ><rect x="0.5" y="0.5" width="17" height="12" fill="#8a8a8a" stroke="#d6d6d6"/><rect x="1" y="1" width="5.5" height="5.5" fill="#2a2a2a"/><rect x="6.5" y="6.5" width="5.5" height="5.5" fill="#2a2a2a"/><rect x="12" y="1" width="5" height="5.5" fill="#b5b5b5"/><path d="M6.5 0V13M12 0V13M0 6.5H18" stroke="#d6d6d6" stroke-width="1"/></svg>
<div class="t" style="left:891px;top:124px;color:#f0f0f0">色板</div>
<svg class="a" style="left:865px;top:163px" width="18" height="18" viewBox="0 0 18 18" ><circle cx="9" cy="9" r="7.5" fill="#8a8a8a" stroke="#d6d6d6" stroke-width="1.5"/><path d="M3.7 14.3 A7.5 7.5 0 0 1 14.3 3.7Z" fill="#d6d6d6"/></svg>
<div class="t" style="left:891px;top:165px;color:#f0f0f0">调整</div>
<svg class="a" style="left:864px;top:190px" width="19" height="20" viewBox="0 0 19 20" ><rect x="6" y="1" width="12" height="12" fill="#a9a9a9"/><text x="0" y="18" font-size="13" font-style="italic" font-family="Liberation Serif,serif" fill="#d6d6d6">fx</text></svg>
<div class="t" style="left:891px;top:193px;color:#f0f0f0">样式</div>
<svg class="a" style="left:863px;top:231px" width="21" height="18" viewBox="0 0 21 18" ><path d="M10.5 1 L20 6 L10.5 11 L1 6Z" fill="#d6d6d6"/><path d="M3.5 9.5 L1 11 L10.5 16 L20 11 L17.5 9.5 L10.5 13.2Z" fill="#a9a9a9"/></svg>
<div class="t" style="left:891px;top:234px;color:#f0f0f0">图层</div>
<div class="a" style="left:858px;top:256px;width:70px;height:24px;background:#383838;border-radius:3px"></div>
<svg class="a" style="left:864px;top:259px" width="19" height="18" viewBox="0 0 19 18" ><circle cx="9.5" cy="6.5" r="5.5" fill="#d6d6d6"/><circle cx="6" cy="11.5" r="5.5" fill="#bdbdbd"/><circle cx="13" cy="11.5" r="5.5" fill="#9b9b9b"/><path d="M9.5 8 L12 11 L9.5 14 L7 11Z" fill="#444"/></svg>
<div class="t" style="left:891px;top:262px;color:#f0f0f0">通道</div>
<svg class="a" style="left:863px;top:288px" width="21" height="17" viewBox="0 0 21 17" ><path d="M4 14 Q5 4 10.5 3.5 Q16 4 17 14" fill="none" stroke="#d6d6d6" stroke-width="1.2"/><path d="M2 3.5H19" stroke="#d6d6d6" stroke-width="1"/><rect x="0.5" y="1.5" width="4" height="4" fill="#d6d6d6"/><rect x="16.5" y="1.5" width="4" height="4" fill="#d6d6d6"/><rect x="8.5" y="1.5" width="4" height="4" fill="#d6d6d6"/><rect x="2" y="12" width="4" height="4" fill="#535353" stroke="#d6d6d6"/><rect x="15" y="12" width="4" height="4" fill="#535353" stroke="#d6d6d6"/></svg>
<div class="t" style="left:891px;top:290px;color:#f0f0f0">路径</div>
<div class="a" style="left:611px;top:214px;width:242px;height:236px;background:#535353;border:1px solid #2b2b2b;box-shadow:1px 2px 3px rgba(0,0,0,.5)"></div>
<div class="a" style="left:612px;top:215px;width:240px;height:20px;background:#3a3a3a;border-bottom:1px solid #2c2c2c"></div>
<div class="a" style="left:613px;top:216px;width:36px;height:18px;background:#424242"></div>
<div class="a" style="left:688px;top:216px;width:36px;height:18px;background:#424242"></div>
<div class="a" style="left:650px;top:215px;width:38px;height:21px;background:#535353;border-left:1px solid #2c2c2c;border-right:1px solid #2c2c2c"></div>
<div class="t" style="left:620px;top:220px;color:#909090">图层</div>
<div class="t" style="left:657px;top:220px;color:#f4f4f4">通道</div>
<div class="t" style="left:694px;top:220px;color:#909090">路径</div>
<svg class="a" style="left:812px;top:222px" width="9" height="7" viewBox="0 0 9 7" ><path d="M0 0 L4 3.5 L0 7Z M4.5 0 L8.5 3.5 L4.5 7Z" fill="#d0d0d0"/></svg>
<div class="a" style="left:827px;top:218px;width:1px;height:15px;background:#2c2c2c;box-shadow:1px 0 0 #555"></div>
<svg class="a" style="left:834px;top:222px" width="15" height="8" viewBox="0 0 15 8" ><path d="M0 2 H5 L2.5 5Z" fill="#ddd"/><path d="M6 1.5H14M6 4H14M6 6.5H14" stroke="#ddd" stroke-width="1"/></svg>
<div class="a" style="left:837px;top:236px;width:15px;height:188px;background:#4a4a4a;border-left:1px solid #3c3c3c"></div>
<div class="row" style="top:236px;">
<div class="eye"></div><div class="cb"></div>
<div class="th" style="background:#585858;color:#fff">中国画</div><div class="nm"><span style="font-size:11.5px;letter-spacing:-0.3px">RGB</span></div><div class="sc">Ctrl+2</div></div>
<div class="row" style="top:266px;">
<div class="eye"></div><div class="cb"></div>
<div class="th" style="background:#7c7c7c;color:#fff">中国画</div><div class="nm">红</div><div class="sc">Ctrl+3</div></div>
<div class="row" style="top:296px;">
<div class="eye"></div><div class="cb"></div>
<div class="th" style="background:#7c7c7c;color:#fff">中国画</div><div class="nm">绿</div><div class="sc">Ctrl+4</div></div>
<div class="row" style="top:326px;">
<div class="eye"></div><div class="cb"></div>
<div class="th" style="background:#7c7c7c;color:#fff">中国画</div><div class="nm">蓝</div><div class="sc">Ctrl+5</div></div>
<div class="row" style="top:356px;">
<div class="eye"></div><div class="cb"></div>
<div class="th" style="background:#474747;color:#ddd">中国画</div><div class="nm"><span style="font-size:11.5px">Alpha 1</span></div><div class="sc">Ctrl+6</div></div>
<div class="row" style="top:386px;background:#54647c;">
<div class="eye" style="border-right-color:#44536a"></div><svg class="a" style="left:5px;top:9px" width="16" height="11" viewBox="0 0 16 11"><path d="M0.5 5.5 Q8 -2.5 15.5 5.5 Q8 12.5 0.5 5.5Z" fill="#c9cfda"/><circle cx="8" cy="5.3" r="3" fill="#4b5870"/><circle cx="7" cy="4.3" r="1" fill="#c9cfda"/></svg>
<div class="th" style="background:#a9a9a9;color:#a08c86">中国画</div><div class="nm"><span style="font-size:11.5px">Alpha 1</span><span style="margin-left:2px">副本</span></div><div class="sc">Ctrl+7</div></div>
<div class="a" style="left:612px;top:424px;width:240px;height:19px;background:#4d4d4d;border-top:1px solid #3a3a3a"></div>
<svg class="a" style="left:722px;top:428px" width="13" height="12" viewBox="0 0 13 12" ><circle cx="6.5" cy="6" r="4.8" fill="none" stroke="#9a9a9a" stroke-width="1.4" stroke-dasharray="2 1.8"/></svg>
<svg class="a" style="left:750px;top:428px" width="15" height="12" viewBox="0 0 15 12" ><rect x="0.5" y="0.5" width="14" height="11" fill="#8e8e8e"/><circle cx="7.5" cy="6" r="3" fill="#4d4d4d"/></svg>
<svg class="a" style="left:783px;top:428px" width="12" height="12" viewBox="0 0 12 12" ><path d="M2 0.5H11.5V10H8V11.5H0.5V4H2Z" fill="#8e8e8e"/><rect x="2" y="5.5" width="4.5" height="4.5" fill="#4d4d4d"/></svg>
<svg class="a" style="left:811px;top:427px" width="13" height="14" viewBox="0 0 13 14" ><path d="M1 3H12V4.5H1Z M4.5 1H8.5V3H4.5Z" fill="#8e8e8e"/><path d="M2 5.5H11L10.2 13.5H2.8Z" fill="#8e8e8e"/><path d="M4.5 6.5V12.5M6.5 6.5V12.5M8.5 6.5V12.5" stroke="#4d4d4d" stroke-width="0.8"/></svg>
<svg class="a" style="left:842px;top:434px" width="8" height="8" viewBox="0 0 8 8" ><path d="M7 1v1M5 3v1M7 3v1M3 5v1M5 5v1M7 5v1" stroke="#888" stroke-width="1"/></svg>
<div class="a" style="left:612px;top:443px;width:240px;height:6px;background:#474747;border-top:1px solid #333"></div>
<div class="a" style="left:722px;top:445px;width:19px;height:3px;background:repeating-linear-gradient(90deg,#333 0 1px,#666 1px 2px)"></div>
<div class="a" style="left:905px;top:124px;width:29px;height:537px;background:#fff;border-radius:3px 0 0 3px;box-shadow:-1px 0 2px rgba(0,0,0,.25)"></div>
<div class="a" style="left:905px;top:124px;width:29px;height:83px;background:#f5f7fa;border-radius:3px 0 0 0"></div>
<div class="a" style="left:905px;top:542px;width:29px;height:1px;background:#e4e6ea"></div>
<svg class="a" style="left:917px;top:138px" width="17" height="26" viewBox="0 0 17 26" ><ellipse cx="10" cy="21.5" rx="8" ry="3" fill="#ececec"/><path d="M7 13 L13 1.5 L17 1 V13 Z" fill="#8b3f14"/><path d="M8.5 11 L13 2.5 L17 2 V4 L14 4.5 L10 12Z" fill="#b85a1e"/><rect x="7" y="10.5" width="7" height="8.5" fill="#f0cf4c"/><rect x="14" y="10.5" width="3" height="8.5" fill="#a9591f"/><ellipse cx="4.5" cy="15.5" rx="4.5" ry="3.8" fill="#3f8f2a"/><ellipse cx="9" cy="18.5" rx="3" ry="2" fill="#5aa535"/></svg>
<svg class="a" style="left:914px;top:177px" width="19" height="21" viewBox="0 0 19 21" ><path d="M3 2.5 Q5.5 0.5 6.5 3 L7.5 6.5 Q7.5 8 5.5 8.5 Q7 13.5 11.5 15.5 Q13 13.5 14.5 14.5 L17.5 16.5 Q18.5 18 16.5 19.5 Q12 21 6 14.5 Q1 7.5 3 2.5Z" fill="#8a93a1"/></svg>
<div class="a" style="left:905px;top:543px;width:29px;height:118px;background:#f7f8fa;border-radius:0 0 0 3px"></div>
<div class="t" style="left:915px;top:549px;font-size:19.5px;line-height:24px;height:24px;color:#737b89;transform-origin:0 0;transform:scaleX(1.15)">A</div>
<div class="a" style="left:257px;top:143px;width:340px;height:413px;background:#efefef;border-radius:5px 5px 0 0;box-shadow:0 0 0 1px rgba(45,45,45,.8);overflow:hidden"><div class="a" style="left:0;top:0;width:340px;height:25px;background:linear-gradient(#c0cee0,#dbe5f1 80%,#e9edf1)"></div><div class="a" style="left:0;top:0;width:340px;height:413px;border:2px solid #f8f8f8;border-top-width:1px;border-radius:5px 5px 0 0"></div></div>
<div class="t" style="left:263px;top:148px;color:#3a3f47">浮雕效果</div>
<div class="a" style="left:563px;top:147px;width:30px;height:17px;border:1px solid #8d9db4;border-radius:2px;background:linear-gradient(#d2dcea,#b9c8dd);box-shadow:inset 0 0 0 1px #e3eaf3"></div>
<svg class="a" style="left:571px;top:150px" width="14" height="11" viewBox="0 0 14 11" ><path d="M3 2 L11 9 M11 2 L3 9" stroke="#6d7788" stroke-width="3.6" stroke-linecap="round"/><path d="M3 2 L11 9 M11 2 L3 9" stroke="#fff" stroke-width="2" stroke-linecap="round"/></svg>
<div class="a" style="left:269px;top:177px;width:208px;height:208px;background:#a0a0a0;border:1px solid #151515;overflow:hidden"><div class="a" id="emb" style="left:-39px;top:100px;font-size:81px;line-height:100px;height:100px;font-weight:300;white-space:nowrap;color:transparent;letter-spacing:12px;transform-origin:0 0;transform:scaleY(1.06);filter:blur(0.6px);text-shadow:-2px 2px 1.6px #fff,-2px 2px 1px #fff,2.6px -2.6px 1.8px #0c0c0c,2.6px -2.6px 1px #222">中国画</div></div>
<div class="a dk" style="left:493px;top:178px;width:91px;height:18px;border:1px solid #3ab4e4;border-radius:3px;background:linear-gradient(#eaf6fd 0,#d9f0fc 48%,#bee6fd 52%,#a7d9f5);box-shadow:inset 0 0 0 1px #aee4f8;text-align:center;line-height:16px;color:#000">确定</div>
<div class="a dk" style="left:493px;top:206px;width:91px;height:18px;border:1px solid #707070;border-radius:3px;background:linear-gradient(#f4f4f4 0,#ebebeb 48%,#dddddd 52%,#cfcfcf);box-shadow:inset 0 0 0 1px #fafafa;text-align:center;line-height:16px;color:#000">取消</div>
<div class="a" style="left:492px;top:240px;width:13px;height:13px;border:1px solid #8e8f8f;background:linear-gradient(135deg,#dcdfe4,#fff)"></div>
<svg class="a" style="left:494px;top:242px" width="10" height="10" viewBox="0 0 10 10" ><path d="M1.5 4.5 L4 8 L8.5 1.5" fill="none" stroke="#4b5f9d" stroke-width="2"/></svg>
<div class="t" style="left:508px;top:240px;color:#000">预览(P)</div>
<svg class="a" style="left:322px;top:391px" width="11" height="11" viewBox="0 0 11 11" ><rect x="0.5" y="0.5" width="10" height="10" fill="#f4f4f4" stroke="#555"/><path d="M3 5.5H8" stroke="#222" stroke-width="1"/></svg>
<svg class="a" style="left:413px;top:391px" width="11" height="11" viewBox="0 0 11 11" ><rect x="0.5" y="0.5" width="10" height="10" fill="#f4f4f4" stroke="#555"/><path d="M3 5.5H8" stroke="#222" stroke-width="1"/><path d="M5.5 3V8" stroke="#222" stroke-width="1"/></svg>
<div class="t" style="left:358px;top:389px;color:#111;font-size:11px">100%</div>
<div class="t" style="left:277px;top:431px;color:#000;letter-spacing:0.4px">角度(A):</div>
<div class="inp" style="left:329px;top:428px">62</div>
<div class="t" style="left:374px;top:431px;color:#000">度</div>
<svg class="a" style="left:395px;top:420px" width="36" height="36" viewBox="0 0 36 36" ><defs><linearGradient id="dg" x1="0" y1="0" x2="1" y2="1"><stop offset="0" stop-color="#d4d4d4"/><stop offset="0.6" stop-color="#f4f4f4"/><stop offset="1" stop-color="#ffffff"/></linearGradient></defs><circle cx="18" cy="18" r="16" fill="url(#dg)" stroke="#707070" stroke-width="1"/><path d="M18 18 L24.5 6" stroke="#444" stroke-width="1"/><circle cx="18" cy="18" r="1.6" fill="#333"/></svg>
<div class="t" style="left:277px;top:467px;color:#000;letter-spacing:0.4px">高度(H):</div>
<div class="inp" style="left:329px;top:464px;border-color:#b9d3ec;border-top-color:#9cc0e4">5</div>
<div class="t" style="left:374px;top:467px;color:#000">像素</div>
<div class="t" style="left:277px;top:511px;color:#000;letter-spacing:0.4px">数量(M):</div>
<div class="inp" style="left:329px;top:508px">100</div>
<div class="t" style="left:374px;top:511px;color:#000">%</div>
<div class="a" style="left:276px;top:491px;width:303px;height:5px;border-radius:2px;background:linear-gradient(#8f8f8f,#b0b0b0 40%,#b6b6b6);box-shadow:0 1px 0 #fafafa"></div>
<svg class="a" style="left:283px;top:488px" width="11" height="11" viewBox="0 0 11 11" ><path d="M5.5 0.5 L10.5 5.5 V10.5 H0.5 V5.5Z" fill="#e6e6e6" stroke="#7a7a7a" stroke-width="1"/></svg>
<div class="a" style="left:276px;top:535px;width:303px;height:5px;border-radius:2px;background:linear-gradient(#8f8f8f,#b0b0b0 40%,#b6b6b6);box-shadow:0 1px 0 #fafafa"></div>
<svg class="a" style="left:434px;top:532px" width="11" height="11" viewBox="0 0 11 11" ><path d="M5.5 0.5 L10.5 5.5 V10.5 H0.5 V5.5Z" fill="#e6e6e6" stroke="#7a7a7a" stroke-width="1"/></svg>
</body></html>
